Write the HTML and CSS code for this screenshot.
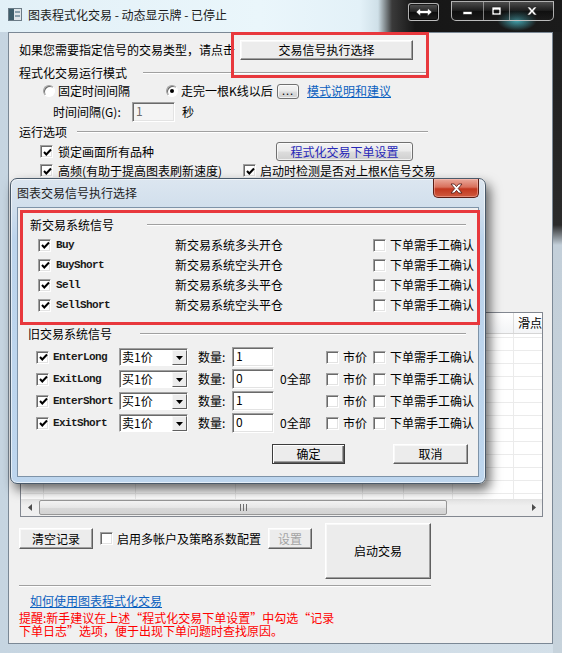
FILE: index.html
```html
<!DOCTYPE html>
<html lang="zh-CN">
<head>
<meta charset="UTF-8">
<meta name="viewport" content="width=device-width, initial-scale=1.0">
<title>图表程式化交易</title>
<link rel="stylesheet" href="styles.css">
</head>
<body>
<div class="window">
    <div class="titlebar">
        <svg class="app-icon" width="14" height="13" viewBox="0 0 14 13">
            <rect x="0.5" y="0.5" width="13" height="12" fill="#dfe6ea" stroke="#6b7b86"/>
            <rect x="1" y="1" width="5" height="11" fill="#3f5e6b"/>
            <rect x="7" y="3" width="5" height="2" fill="#8aa2ae"/>
            <rect x="7" y="7" width="5" height="2" fill="#8aa2ae"/>
        </svg>
        <span class="title-text">图表程式化交易 - 动态显示牌 - 已停止</span>
        <div class="glass">
            <span class="cap cap-snap">
                <svg width="18" height="10" viewBox="0 0 18 10"><path d="M1 5 L5.5 1 V3.5 H12.5 V1 L17 5 L12.5 9 V6.5 H5.5 V9 Z" fill="#fff" stroke="#222" stroke-width="0.7"/></svg>
            </span>
            <div class="cap-group">
                <span class="cap cap-min">
                    <svg width="11" height="10" viewBox="0 0 11 10"><rect x="1" y="5.5" width="9" height="3" fill="#fff" stroke="#222" stroke-width="0.7"/></svg>
                </span>
                <span class="cap cap-max">
                    <svg width="11" height="10" viewBox="0 0 11 10"><path d="M1 1 H10 V9 H1 Z M3 4 V7 H8 V4 Z" fill="#fff" fill-rule="evenodd" stroke="#222" stroke-width="0.7"/></svg>
                </span>
                <span class="cap cap-close">
                    <svg width="12" height="10" viewBox="0 0 12 10"><path d="M1 1 H4 L6 3.5 L8 1 H11 L7.6 5 L11 9 H8 L6 6.5 L4 9 H1 L4.4 5 Z" fill="#fff" stroke="#222" stroke-width="0.7"/></svg>
                </span>
            </div>
        </div>
    </div>

    <div class="frame-mid">
        <div class="client">
            <div class="row row-a">
                <span>如果您需要指定信号的交易类型，请点击</span>
                <span class="btn btn-classic btn-signal">交易信号执行选择</span>
            </div>

            <div class="group-head gh-mode">
                <span>程式化交易运行模式</span><i class="etch"></i>
            </div>
            <div class="row row-c">
                <span class="radio"></span><span class="lbl lbl-fixed">固定时间间隔</span>
                <span class="radio on"></span><span class="lbl lbl-bar">走完一根K线以后</span>
                <span class="btn btn-theme btn-dots">...</span>
                <a class="link link-mode">模式说明和建议</a>
            </div>
            <div class="row row-d">
                <span class="lbl-interval">时间间隔(G):</span>
                <span class="field field-off">1</span>
                <span class="sec">秒</span>
            </div>

            <div class="group-head gh-opt">
                <span>运行选项</span><i class="etch"></i>
            </div>
            <div class="row row-f">
                <span class="cb on"><svg width="9" height="9" viewBox="0 0 9 9"><path d="M1 4 L3.3 6.5 L8 1.5" fill="none" stroke="#000" stroke-width="2"/></svg></span>
                <span class="lbl lbl-lock">锁定画面所有品种</span>
                <span class="btn btn-theme btn-order">程式化交易下单设置</span>
            </div>
            <div class="row row-g">
                <span class="cb on"><svg width="9" height="9" viewBox="0 0 9 9"><path d="M1 4 L3.3 6.5 L8 1.5" fill="none" stroke="#000" stroke-width="2"/></svg></span>
                <span class="lbl lbl-fast">高频(有助于提高图表刷新速度)</span>
                <span class="cb on"><svg width="9" height="9" viewBox="0 0 9 9"><path d="M1 4 L3.3 6.5 L8 1.5" fill="none" stroke="#000" stroke-width="2"/></svg></span>
                <span class="lbl lbl-check">启动时检测是否对上根K信号交易</span>
            </div>

            <div class="list">
                <div class="list-head">
                    <span class="col c1"></span><span class="col c2"></span><span class="col c3"></span><span class="col c4"></span>
                    <span class="col c5"></span><span class="col c6"></span><span class="col c7"></span><span class="col c8">滑点</span>
                </div>
                <div class="list-body">
                    <span class="col c1"></span><span class="col c2"></span><span class="col c3"></span><span class="col c4"></span>
                    <span class="col c5"></span><span class="col c6"></span><span class="col c7"></span><span class="col c8"></span>
                </div>
                <div class="hscroll">
                    <span class="sb-arrow"><svg width="4" height="7" viewBox="0 0 4 7"><path d="M4 0 V7 L0 3.5 Z" fill="#4d4d4d"/></svg></span>
                    <span class="sb-thumb"><svg width="7" height="7" viewBox="0 0 7 7"><path d="M0.5 0 V7 M3.5 0 V7 M6.5 0 V7" stroke="#6f6f6f"/></svg></span>
                    <span class="sb-arrow sb-right"><svg width="4" height="7" viewBox="0 0 4 7"><path d="M0 0 V7 L4 3.5 Z" fill="#4d4d4d"/></svg></span>
                </div>
            </div>

            <div class="row row-bottom">
                <div class="left-ctrls">
                    <span class="btn btn-classic btn-clear">清空记录</span>
                    <span class="cb cb-multi"></span>
                    <span class="lbl lbl-multi">启用多帐户及策略系数配置</span>
                    <span class="btn btn-classic btn-set">设置</span>
                </div>
                <span class="btn btn-classic btn-start">启动交易</span>
            </div>
            <i class="etch sep-bottom"></i>
            <a class="link link-help">如何使用图表程式化交易</a>
            <p class="warn">提醒:新手建议在上述“程式化交易下单设置”中勾选“记录<br>下单日志”选项，便于出现下单问题时查找原因。</p>
        </div>
    </div>

    <div class="mark mark-top"></div>

    <div class="dialog">
        <div class="dlg-title">
            <span class="dlg-title-text">图表交易信号执行选择</span>
            <span class="dlg-close">
                <svg width="13" height="11" viewBox="0 0 13 11"><path d="M1 1 H4.3 L6.5 3.6 L8.7 1 H12 L8.2 5.5 L12 10 H8.7 L6.5 7.4 L4.3 10 H1 L4.8 5.5 Z" fill="#fff" stroke="#4a1510" stroke-width="0.8"/></svg>
            </span>
        </div>
        <div class="dlg-client">
            <div class="group-head dlg-gh1">
                <span>新交易系统信号</span><i class="etch"></i>
            </div>
            <div class="sig-row first">
                <span class="cb on"><svg width="9" height="9" viewBox="0 0 9 9"><path d="M1 4 L3.3 6.5 L8 1.5" fill="none" stroke="#000" stroke-width="2"/></svg></span>
                <span class="code code-new">Buy</span>
                <span class="desc">新交易系统多头开仓</span>
                <span class="cb"></span>
                <span class="lbl lbl-man">下单需手工确认</span>
            </div>
            <div class="sig-row">
                <span class="cb on"><svg width="9" height="9" viewBox="0 0 9 9"><path d="M1 4 L3.3 6.5 L8 1.5" fill="none" stroke="#000" stroke-width="2"/></svg></span>
                <span class="code code-new">BuyShort</span>
                <span class="desc">新交易系统空头开仓</span>
                <span class="cb"></span>
                <span class="lbl lbl-man">下单需手工确认</span>
            </div>
            <div class="sig-row">
                <span class="cb on"><svg width="9" height="9" viewBox="0 0 9 9"><path d="M1 4 L3.3 6.5 L8 1.5" fill="none" stroke="#000" stroke-width="2"/></svg></span>
                <span class="code code-new">Sell</span>
                <span class="desc">新交易系统多头平仓</span>
                <span class="cb"></span>
                <span class="lbl lbl-man">下单需手工确认</span>
            </div>
            <div class="sig-row">
                <span class="cb on"><svg width="9" height="9" viewBox="0 0 9 9"><path d="M1 4 L3.3 6.5 L8 1.5" fill="none" stroke="#000" stroke-width="2"/></svg></span>
                <span class="code code-new">SellShort</span>
                <span class="desc">新交易系统空头平仓</span>
                <span class="cb"></span>
                <span class="lbl lbl-man">下单需手工确认</span>
            </div>

            <div class="group-head dlg-gh2">
                <span>旧交易系统信号</span><i class="etch"></i>
            </div>
            <div class="old-row first">
                <span class="cb on"><svg width="9" height="9" viewBox="0 0 9 9"><path d="M1 4 L3.3 6.5 L8 1.5" fill="none" stroke="#000" stroke-width="2"/></svg></span>
                <span class="code code-old">EnterLong</span>
                <span class="combo"><span class="combo-val">卖1价</span><span class="combo-btn"><svg width="7" height="4" viewBox="0 0 7 4"><path d="M0 0 H7 L3.5 4 Z" fill="#000"/></svg></span></span>
                <span class="qty-lbl">数量:</span>
                <span class="field">1</span>
                <span class="all-lbl"></span>
                <span class="cb"></span>
                <span class="lbl lbl-mkt">市价</span>
                <span class="cb"></span>
                <span class="lbl lbl-man">下单需手工确认</span>
            </div>
            <div class="old-row">
                <span class="cb on"><svg width="9" height="9" viewBox="0 0 9 9"><path d="M1 4 L3.3 6.5 L8 1.5" fill="none" stroke="#000" stroke-width="2"/></svg></span>
                <span class="code code-old">ExitLong</span>
                <span class="combo"><span class="combo-val">买1价</span><span class="combo-btn"><svg width="7" height="4" viewBox="0 0 7 4"><path d="M0 0 H7 L3.5 4 Z" fill="#000"/></svg></span></span>
                <span class="qty-lbl">数量:</span>
                <span class="field">0</span>
                <span class="all-lbl">0全部</span>
                <span class="cb"></span>
                <span class="lbl lbl-mkt">市价</span>
                <span class="cb"></span>
                <span class="lbl lbl-man">下单需手工确认</span>
            </div>
            <div class="old-row">
                <span class="cb on"><svg width="9" height="9" viewBox="0 0 9 9"><path d="M1 4 L3.3 6.5 L8 1.5" fill="none" stroke="#000" stroke-width="2"/></svg></span>
                <span class="code code-old">EnterShort</span>
                <span class="combo"><span class="combo-val">买1价</span><span class="combo-btn"><svg width="7" height="4" viewBox="0 0 7 4"><path d="M0 0 H7 L3.5 4 Z" fill="#000"/></svg></span></span>
                <span class="qty-lbl">数量:</span>
                <span class="field">1</span>
                <span class="all-lbl"></span>
                <span class="cb"></span>
                <span class="lbl lbl-mkt">市价</span>
                <span class="cb"></span>
                <span class="lbl lbl-man">下单需手工确认</span>
            </div>
            <div class="old-row">
                <span class="cb on"><svg width="9" height="9" viewBox="0 0 9 9"><path d="M1 4 L3.3 6.5 L8 1.5" fill="none" stroke="#000" stroke-width="2"/></svg></span>
                <span class="code code-old">ExitShort</span>
                <span class="combo"><span class="combo-val">卖1价</span><span class="combo-btn"><svg width="7" height="4" viewBox="0 0 7 4"><path d="M0 0 H7 L3.5 4 Z" fill="#000"/></svg></span></span>
                <span class="qty-lbl">数量:</span>
                <span class="field">0</span>
                <span class="all-lbl">0全部</span>
                <span class="cb"></span>
                <span class="lbl lbl-mkt">市价</span>
                <span class="cb"></span>
                <span class="lbl lbl-man">下单需手工确认</span>
            </div>

            <div class="dlg-buttons">
                <span class="btn btn-default btn-ok">确定</span>
                <span class="btn btn-classic btn-cancel">取消</span>
            </div>

            <div class="mark mark-dlg"></div>
        </div>
    </div>
</div>
</body>
</html>
```

FILE: styles.css
```css
* {
  box-sizing: border-box;
}
body {
  margin: 0;
  background: #ffffff;
  font-family: "Noto Sans CJK SC", "Liberation Sans", sans-serif;
  font-size: 12px;
  line-height: 14px;
  color: #000000;
}
.window {
  position: relative;
  width: 562px;
  height: 653px;
  display: flex;
  flex-direction: column;
  overflow: hidden;
  background:
    linear-gradient(to bottom, #1c1c1c 0, #2b2b2b 225px, #c3cfd9 245px, #c7d3dc 100%) right top / 9px 100% no-repeat,
    linear-gradient(to right, #c6d5e1, #d4e0e9);
}

/* title bar */
.titlebar {
  height: 32px;
  flex: none;
  display: flex;
  align-items: flex-start;
  background: linear-gradient(to right, #e2f0f7 0, #eaf6fb 260px, #e3f1f8 360px, #cfe0e8 378px, #3a3a3a 392px, #161616 415px, #1b1b1b 100%);
}
.app-icon {
  flex: none;
  margin: 8px 0 0 8px;
}
.title-text {
  margin: 8px 0 0 6px;
  color: #1a1a1a;
  white-space: nowrap;
}
.glass {
  margin-left: auto;
  width: 177px;
  height: 32px;
  display: flex;
  align-items: flex-start;
  background: radial-gradient(ellipse 20px 11px at 132px 20px, rgba(80, 205, 220, 0.8), rgba(80, 205, 220, 0));
}
.cap {
  display: flex;
  align-items: center;
  justify-content: center;
  height: 100%;
}
.cap-snap {
  margin: 3px 0 0 23px;
  width: 31px;
  height: 18px;
  border: 1px solid rgba(225, 225, 225, 0.75);
  border-radius: 3px;
  background: linear-gradient(#555555, #242424 48%, #0c0c0c 52%, #1f1f1f);
  box-shadow: inset 0 0 0 1px rgba(0, 0, 0, 0.7);
}
.cap-group {
  margin: 1px 0 0 12px;
  width: 103px;
  height: 20px;
  display: flex;
  border: 1px solid rgba(225, 225, 225, 0.75);
  border-radius: 0 0 5px 5px;
  overflow: hidden;
  background: linear-gradient(rgba(85, 85, 85, 0.85), rgba(30, 30, 30, 0.8) 48%, rgba(10, 10, 10, 0.6) 52%, rgba(30, 30, 30, 0.4));
}
.cap-min {
  width: 31px;
}
.cap-max {
  width: 26px;
  border-left: 1px solid rgba(200, 200, 200, 0.6);
}
.cap-close {
  flex: 1;
  border-left: 1px solid rgba(200, 200, 200, 0.6);
}

/* main client area */
.frame-mid {
  flex: 1;
  display: flex;
  padding: 0 9px 9px 8px;
}
.client {
  flex: 1;
  display: flex;
  flex-direction: column;
  align-items: flex-start;
  padding: 7px 0 0 10px;
  background: #f0f0f0;
  border: 1px solid #7b8895;
}
.row {
  display: flex;
  align-items: center;
  flex: none;
  white-space: nowrap;
}
.lbl {
  margin-left: 4px;
  white-space: nowrap;
}
.link {
  color: #0a5fbf;
  text-decoration: underline;
  white-space: nowrap;
}

/* buttons */
.btn {
  display: flex;
  align-items: center;
  justify-content: center;
  flex: none;
  white-space: nowrap;
}
.btn-classic {
  background: #ececec;
  border: 1px solid;
  border-color: #ffffff #5f5f5f #5f5f5f #ffffff;
  box-shadow: inset -1px -1px #a0a0a0, inset 1px 1px #f8f8f8;
}
.btn-default {
  background: #ececec;
  border: 1px solid #3c3c3c;
  box-shadow: inset 1px 1px #ffffff, inset -1px -1px #5f5f5f, inset -2px -2px #a0a0a0;
}
.btn-theme {
  border: 1px solid #707070;
  border-radius: 3px;
  background: linear-gradient(#f2f2f2 0, #ebebeb 48%, #dddddd 52%, #cfcfcf 100%);
  box-shadow: inset 0 0 0 1px rgba(255, 255, 255, 0.7);
}
.btn-signal {
  margin-left: 5px;
  width: 173px;
  height: 20px;
}

/* etched lines and group headers */
.etch {
  display: block;
  flex: none;
  height: 2px;
  border-top: 1px solid #a0a0a0;
  border-bottom: 1px solid #ffffff;
}
.group-head {
  display: flex;
  align-items: center;
  height: 14px;
  flex: none;
  white-space: nowrap;
}
.gh-mode {
  margin-top: 6px;
}
.gh-mode .etch {
  margin-left: 16px;
  width: 285px;
}
.gh-opt {
  margin-top: 3px;
}
.gh-opt .etch {
  margin-left: 10px;
  width: 351px;
}

/* radios, checkboxes, fields */
.radio {
  flex: none;
  width: 12px;
  height: 12px;
  border-radius: 50%;
  background: #ffffff;
  border: 1px solid;
  border-color: #a0a0a0 #ffffff #ffffff #a0a0a0;
  box-shadow: inset 1px 1px #6a6a6a;
  display: flex;
  align-items: center;
  justify-content: center;
}
.radio.on::after {
  content: "";
  width: 4px;
  height: 4px;
  border-radius: 50%;
  background: #000000;
}
.cb {
  flex: none;
  width: 13px;
  height: 13px;
  background: #ffffff;
  border: 1px solid;
  border-color: #a0a0a0 #ffffff #ffffff #a0a0a0;
  box-shadow: inset 1px 1px #6a6a6a, inset -1px -1px #e3e3e3;
  display: flex;
  align-items: center;
  justify-content: center;
}
.cb svg {
  margin: 1px 0 0 1px;
}
.field {
  flex: none;
  width: 42px;
  height: 20px;
  padding: 1px 0 0 3px;
  line-height: 14px;
  background: #ffffff;
  border: 1px solid;
  border-color: #a0a0a0 #ffffff #ffffff #a0a0a0;
  box-shadow: inset 1px 1px #6a6a6a, inset -1px -1px #e3e3e3;
}
.field-off {
  width: 43px;
  background: #f4f4f4;
  color: #6d6d6d;
}

.row-c {
  height: 16px;
  margin-top: 3px;
}
.row-c .radio:first-child {
  margin-left: 24px;
}
.row-c .lbl {
  margin-left: 3px;
}
.lbl-fixed {
  width: 108px;
}
.lbl-bar {
  width: 96px;
}
.btn-dots {
  width: 22px;
  height: 15px;
  line-height: 10px;
  letter-spacing: 1px;
  font-size: 11px;
  align-items: flex-end;
  padding-bottom: 3px;
}
.link-mode {
  margin-left: 8px;
}
.row-d {
  height: 20px;
  margin-top: 3px;
}
.lbl-interval {
  margin-left: 34px;
  width: 79px;
}
.sec {
  margin-left: 7px;
}
.row-f {
  height: 19px;
  margin-top: 3px;
}
.row-f .cb,
.row-g .cb:first-child {
  margin-left: 21px;
}
.lbl-lock {
  margin-left: 5px;
  width: 218px;
}
.btn-order {
  width: 137px;
  height: 19px;
  color: #2727b8;
}
.row-g {
  height: 15px;
  margin-top: 2px;
}
.lbl-fast {
  margin-left: 5px;
  width: 185px;
}

/* list view behind the dialog */
.list {
  margin: 134px 0 0 1px;
  width: 523px;
  height: 205px;
  flex: none;
  display: flex;
  flex-direction: column;
  border: 1px solid #828790;
  background: #ffffff;
}
.list-head {
  display: flex;
  height: 21px;
  flex: none;
  border-bottom: 1px solid #d5d5d5;
  background: linear-gradient(#ffffff, #f3f4f6);
}
.list-head .col {
  border-right: 1px solid #dcdcdc;
  line-height: 20px;
  padding-left: 5px;
  white-space: nowrap;
  overflow: hidden;
}
.list-head .c8 {
  padding-left: 4px;
}
.list-body {
  flex: 1;
  display: flex;
  background: linear-gradient(to bottom, transparent 12px, #ebebeb 12px) 0 4px / 100% 13px;
}
.list-body .col {
  border-right: 1px solid #ebebeb;
}
.col {
  flex: none;
  height: 100%;
}
.c1 { width: 23px; }
.c2 { width: 92px; }
.c3 { width: 100px; }
.c4 { width: 127px; }
.c5 { width: 41px; }
.c6 { width: 49px; }
.c7 { width: 61px; }
.c8 { flex: 1; min-width: 0; border-right: none !important; }
.hscroll {
  height: 17px;
  flex: none;
  display: flex;
  align-items: center;
  background: linear-gradient(#e3e3e3, #efefef 40%, #efefef);
}
.sb-arrow {
  width: 17px;
  height: 17px;
  display: flex;
  align-items: center;
  justify-content: center;
  flex: none;
}
.sb-right {
  margin-left: auto;
}
.sb-thumb {
  margin-left: 1px;
  width: 408px;
  height: 15px;
  display: flex;
  align-items: center;
  justify-content: center;
  border: 1px solid #979797;
  border-radius: 2px;
  background: linear-gradient(#f5f5f5, #e6e6e6 50%, #d9d9d9 51%, #d3d3d3);
}

/* bottom controls */
.row-bottom {
  margin-top: 6px;
  height: 56px;
  align-items: flex-start;
}
.left-ctrls {
  display: flex;
  align-items: center;
  height: 21px;
  margin-top: 5px;
}
.btn-clear {
  width: 74px;
  height: 21px;
}
.cb-multi {
  margin-left: 7px;
}
.lbl-multi {
  width: 144px;
}
.btn-set {
  margin-left: 7px;
  width: 44px;
  height: 21px;
  color: #a3a3a3;
}
.btn-start {
  margin-left: 13px;
  width: 106px;
  height: 56px;
}
.sep-bottom {
  margin-top: 6px;
  width: 412px;
}
.link-help {
  margin: 7px 0 0 11px;
}
.warn {
  margin: 3px 0 0;
  line-height: 13px;
  color: #ff0000;
  white-space: nowrap;
}

/* red annotation boxes */
.mark {
  position: absolute;
  border: 3px solid #e8383d;
  pointer-events: none;
}
.mark-top {
  left: 231px;
  top: 32px;
  width: 198px;
  height: 46px;
}
.mark-dlg {
  left: 2px;
  top: 2px;
  width: 460px;
  height: 115px;
}

/* dialog */
.dialog {
  position: absolute;
  left: 10px;
  top: 178px;
  width: 476px;
  height: 306px;
  display: flex;
  flex-direction: column;
  padding: 0 6px 6px;
  border: 1px solid #4a5a6a;
  border-radius: 7px;
  background: linear-gradient(to bottom, #dce6f0 0, #d1dfec 28px, #bcd4ec 60px, #bed6ee 100%);
  box-shadow: 4px 6px 12px rgba(0, 0, 0, 0.6), inset 0 0 0 1px rgba(255, 255, 255, 0.6);
}
.dlg-title {
  height: 28px;
  flex: none;
  display: flex;
  align-items: flex-start;
}
.dlg-title-text {
  margin-top: 7px;
  color: #1e1e1e;
}
.dlg-close {
  margin-left: auto;
  width: 46px;
  height: 19px;
  display: flex;
  align-items: center;
  justify-content: center;
  border: 1px solid #5a1d15;
  border-top: none;
  border-radius: 0 0 5px 5px;
  background: linear-gradient(#eaa99b 0, #d9705c 45%, #c2371f 55%, #cf5a3f 100%);
  box-shadow: inset 0 0 0 1px rgba(255, 200, 190, 0.45);
}
.dlg-client {
  position: relative;
  height: 270px;
  flex: none;
  display: flex;
  flex-direction: column;
  align-items: flex-start;
  background: #f0f0f0;
  border: 1px solid #7e93a8;
}
.dlg-gh1 {
  margin-top: 10px;
  padding-left: 12px;
}
.dlg-gh1 .etch {
  margin-left: 33px;
  width: 319px;
}
.dlg-gh2 {
  margin-top: 12px;
  padding-left: 10px;
}
.dlg-gh2 .etch {
  margin-left: 28px;
  width: 326px;
}
.sig-row {
  display: flex;
  align-items: center;
  height: 20px;
  flex: none;
  padding-left: 20px;
  white-space: nowrap;
}
.sig-row.first {
  margin-top: 3px;
}
.code {
  font-family: "Liberation Mono", "DejaVu Sans Mono", monospace;
  font-size: 11px;
  font-weight: bold;
  letter-spacing: -0.6px;
  color: #1a1a1a;
}
.code-new {
  margin-left: 5px;
  width: 119px;
}
.desc {
  width: 198px;
}
.old-row {
  display: flex;
  align-items: center;
  height: 22px;
  flex: none;
  padding-left: 18px;
  white-space: nowrap;
}
.old-row.first {
  margin-top: 5px;
}
.code-old {
  margin-left: 4px;
  width: 66px;
}
.combo {
  flex: none;
  width: 69px;
  height: 18px;
  display: flex;
  background: #ffffff;
  border: 1px solid;
  border-color: #a0a0a0 #ffffff #ffffff #a0a0a0;
  box-shadow: inset 1px 1px #6a6a6a;
}
.combo-val {
  padding: 1px 0 0 2px;
  line-height: 14px;
}
.combo-btn {
  margin: 1px 0 0 auto;
  width: 15px;
  height: 15px;
  display: flex;
  align-items: center;
  justify-content: center;
  background: #ececec;
  border: 1px solid;
  border-color: #f8f8f8 #5f5f5f #5f5f5f #f8f8f8;
}
.qty-lbl {
  margin-left: 10px;
  width: 34px;
}
.all-lbl {
  margin-left: 6px;
  width: 46px;
}
.lbl-mkt {
  width: 30px;
}
.dlg-buttons {
  display: flex;
  margin-top: 10px;
  height: 20px;
  flex: none;
}
.btn-ok {
  margin-left: 254px;
  width: 73px;
  height: 20px;
}
.btn-cancel {
  margin-left: 48px;
  width: 75px;
  height: 20px;
}
```
